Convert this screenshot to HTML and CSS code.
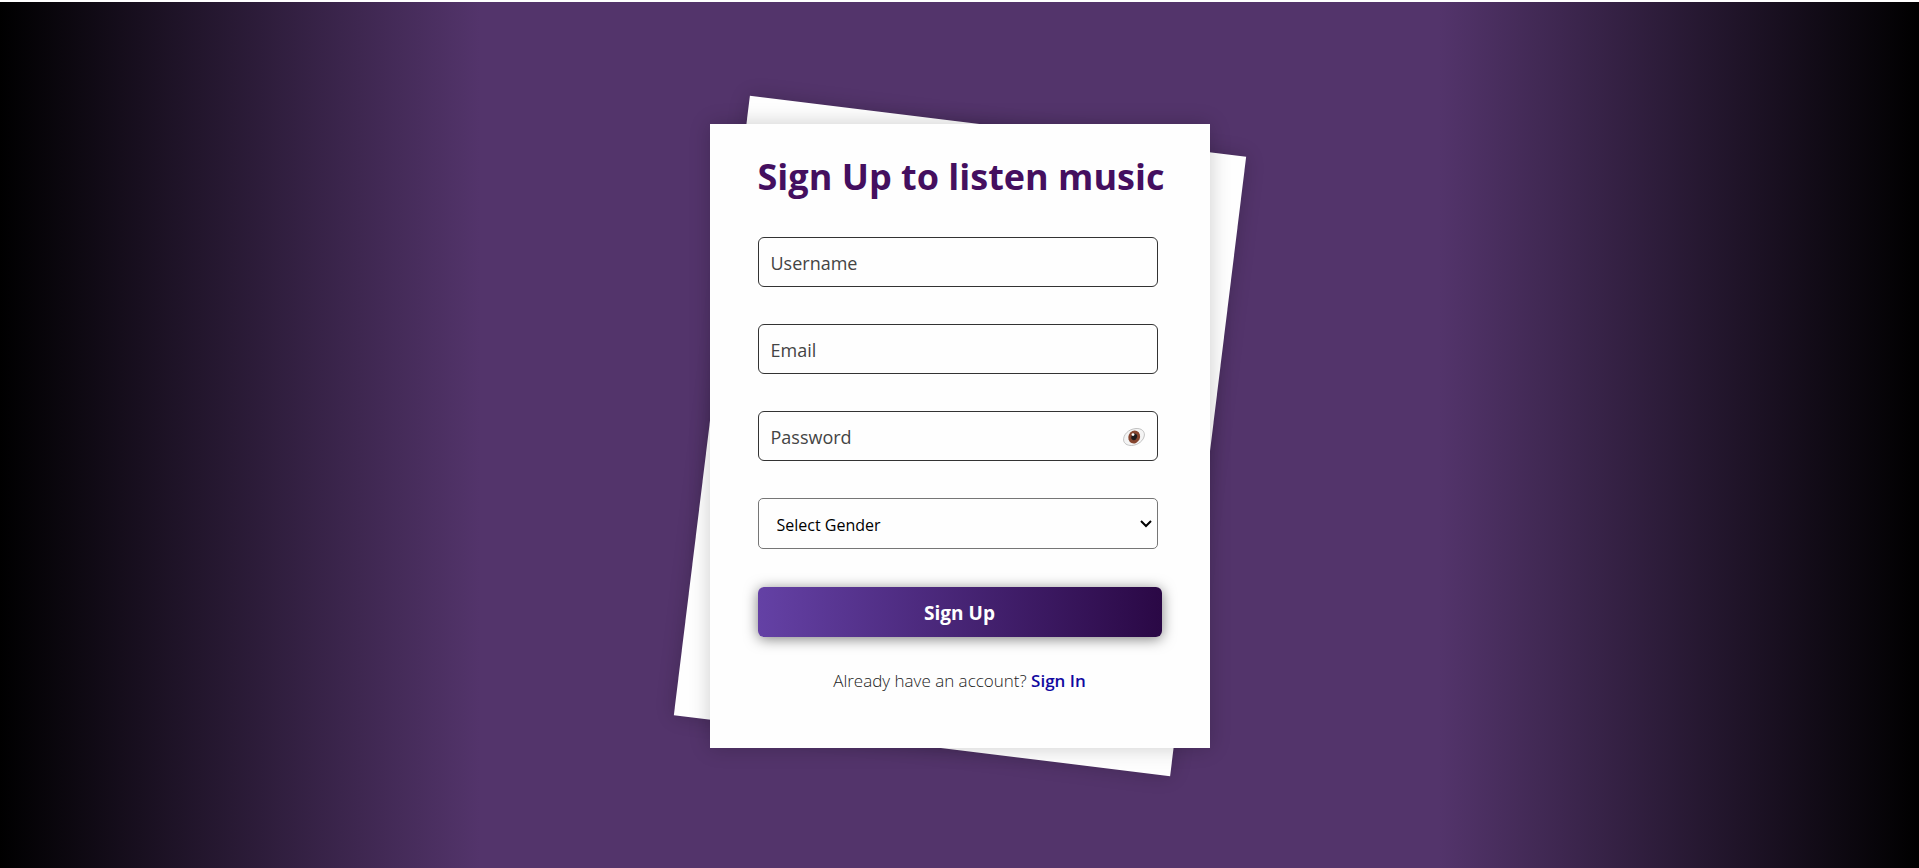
FILE: index.html
```
<!DOCTYPE html>
<html lang="en">
<head>
<meta charset="utf-8">
<meta name="viewport" content="width=device-width, initial-scale=1">
<title>Sign Up</title>
<link rel="stylesheet" href="styles.css">
</head>
<body>
<main class="stage">
  <section class="card">
    <form class="form">
      <h1 class="title">Sign Up to listen music</h1>
      <input class="field" type="text" name="username" placeholder="Username" aria-label="Username">
      <input class="field" type="email" name="email" placeholder="Email" aria-label="Email">
      <div class="password">
        <input class="field" type="password" name="password" placeholder="Password" aria-label="Password">
        <button class="reveal" type="button" aria-label="Show password">
          <svg viewBox="0 0 24 20" width="24" height="20" aria-hidden="true">
            <path d="M1.6 13.2C1.2 8 6 2.200 14 1.500C19.500 1.200 22.600 4.200 22.400 8C22 13.500 16 18.300 9.500 18.500C5 18.500 2 16.500 1.600 13.200Z" fill="#f4f4f4" stroke="#b4b4b4" stroke-width="0.800"/>
            <ellipse cx="12.200" cy="10" rx="5.800" ry="6.600" transform="rotate(24 12.200 10)" fill="#86452f"/>
            <ellipse cx="12.200" cy="9.800" rx="2.800" ry="3.400" transform="rotate(24 12.200 9.800)" fill="#201a1c"/>
            <circle cx="11" cy="7.600" r="1.400" fill="#fff"/>
          </svg>
        </button>
      </div>
      <select class="field select" name="gender" aria-label="Gender">
        <option>Select Gender</option>
        <option>Male</option>
        <option>Female</option>
        <option>Other</option>
      </select>
      <button class="submit" type="submit">Sign Up</button>
      <p class="note">Already have an account? <a class="link" href="#signin">Sign In</a></p>
    </form>
  </section>
</main>
</body>
</html>
```
FILE: styles.css
```
* {
  box-sizing: border-box;
}

body {
  margin: 0;
  border-top: 2px solid #fff;
  font-family: "Segoe UI", "Open Sans", "Noto Sans", sans-serif;
}

.stage {
  display: flex;
  align-items: center;
  justify-content: center;
  min-height: calc(100vh - 2px);
  padding-top: 2px;
  overflow: hidden;
  background: linear-gradient(90deg, #000, #53346b 25%, #53346b 75%, #000);
}

.card {
  position: relative;
  z-index: 0;
  display: flex;
  justify-content: center;
  width: 500px;
  max-width: 100%;
  padding: 24px 48px 53px;
}

/* Tilted sheet and the front face that covers it */
.card::before,
.card::after {
  content: "";
  position: absolute;
  inset: 0;
  z-index: -1;
  background: #fefefe;
  box-shadow: 0 0 20px rgba(0, 0, 0, 0.2);
}

.card::before {
  transform: rotate(7deg);
}

.form {
  display: flex;
  flex-direction: column;
  gap: 37px;
  width: 100%;
}

.title {
  margin: 0 0 -6px;
  color: #440f5f;
  font-size: 36px;
  font-weight: 700;
  line-height: 58px;
  text-align: center;
  white-space: nowrap;
}

.field {
  width: 400px;
  max-width: 100%;
  height: 50px;
  padding: 2px 12px 0;
  border: 1px solid #333;
  border-radius: 6px;
  outline: none;
  background: transparent;
  color: #222;
  font-family: inherit;
  font-size: 18px;
}

.field::placeholder {
  color: #444;
  opacity: 1;
}

.password {
  position: relative;
  display: flex;
  width: 400px;
  max-width: 100%;
}

.reveal {
  position: absolute;
  top: 16px;
  right: 12px;
  display: flex;
  padding: 0;
  border: 0;
  background: none;
  cursor: pointer;
}

.select {
  appearance: none;
  height: 51px;
  padding: 2px 24px 0 18px;
  border-color: #767676;
  border-radius: 5px;
  background: url("data:image/svg+xml,%3Csvg xmlns='http://www.w3.org/2000/svg' width='12' height='8' viewBox='0 0 12 8'%3E%3Cpath d='M1 1l5 5 5-5' fill='none' stroke='%23000' stroke-width='2'/%3E%3C/svg%3E") no-repeat right 5px center;
  color: #000;
  font-size: 16px;
}

.submit {
  height: 50px;
  margin-top: 1px;
  padding: 2px 0 0;
  border: 0;
  border-radius: 6px;
  background: linear-gradient(90deg, #6441a5, #2a0845);
  box-shadow: 0 2px 14px rgba(0, 0, 0, 0.5);
  color: #fff;
  font-family: inherit;
  font-size: 19px;
  font-weight: 700;
  cursor: pointer;
}

.note {
  margin: -7px 0 0;
  color: #222;
  font-size: 17px;
  font-weight: 300;
  line-height: 28px;
  text-align: center;
}

.link {
  color: #1109a0;
  font-weight: 600;
  text-decoration: none;
}
```
